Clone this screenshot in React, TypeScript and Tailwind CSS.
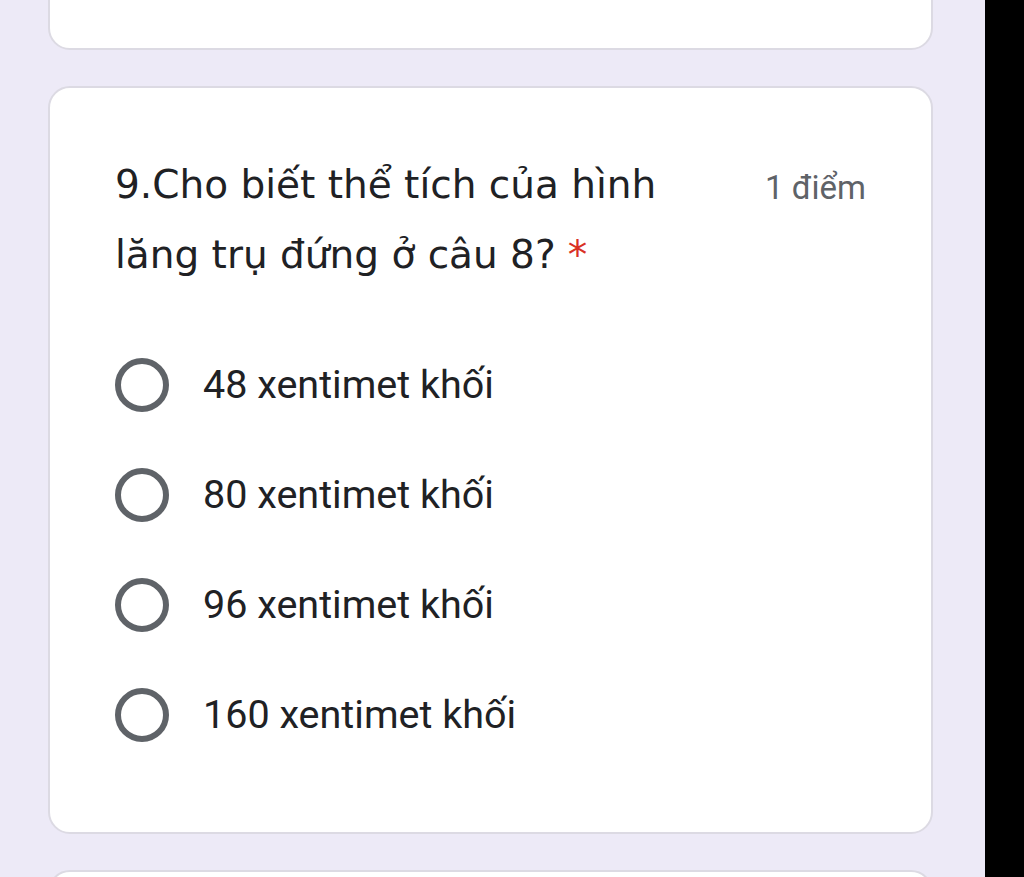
import React from 'react';

const options = ['48 xentimet khối', '80 xentimet khối', '96 xentimet khối', '160 xentimet khối'];

export default function App() {
  return (
    <div className="flex h-[877px] w-[1024px] overflow-hidden bg-black">
      {/* Form column */}
      <div className="flex w-[985px] flex-col bg-[#edeaf7] pl-[48px] pr-[52px]">
        {/* previous question card, cut off at top */}
        <div className="-mt-[150px] h-[200px] shrink-0 rounded-[22px] border-2 border-[#dcdae3] bg-white" />

        {/* question 9 */}
        <div className="mt-[36px] h-[748px] shrink-0 rounded-[22px] border-2 border-[#dcdae3] bg-white px-[65px] pt-[62px]">
          <div className="flex items-start justify-between">
            <div
              className="w-[580px] text-[39px] leading-[70px] text-[#202124]"
              style={{ fontFamily: '"DejaVu Sans", "Open Sans", sans-serif' }}
            >
              9.Cho biết thể tích của hình lăng trụ đứng ở câu 8?
              <span className="ml-[12px] inline-block leading-none text-[#d93025]">*</span>
            </div>
            <div
              className="pt-[18px] text-[33px] leading-[40px] text-[#5f6368]"
              style={{ fontFamily: 'Roboto, sans-serif' }}
            >
              1 điểm
            </div>
          </div>

          <div className="mt-[68px] flex flex-col gap-[56px]">
            {options.map((o) => (
              <label key={o} className="flex items-center gap-[34px]">
                <span className="block h-[54px] w-[54px] rounded-full border-[6px] border-[#5f6368]" />
                <span
                  className="text-[39.5px] leading-[54px] text-[#202124]"
                  style={{ fontFamily: 'Roboto, sans-serif' }}
                >
                  {o}
                </span>
              </label>
            ))}
          </div>
        </div>

        {/* next question card, cut off at bottom */}
        <div className="mt-[36px] h-[200px] shrink-0 rounded-[22px] border-2 border-[#dcdae3] bg-white" />
      </div>
    </div>
  );
}
